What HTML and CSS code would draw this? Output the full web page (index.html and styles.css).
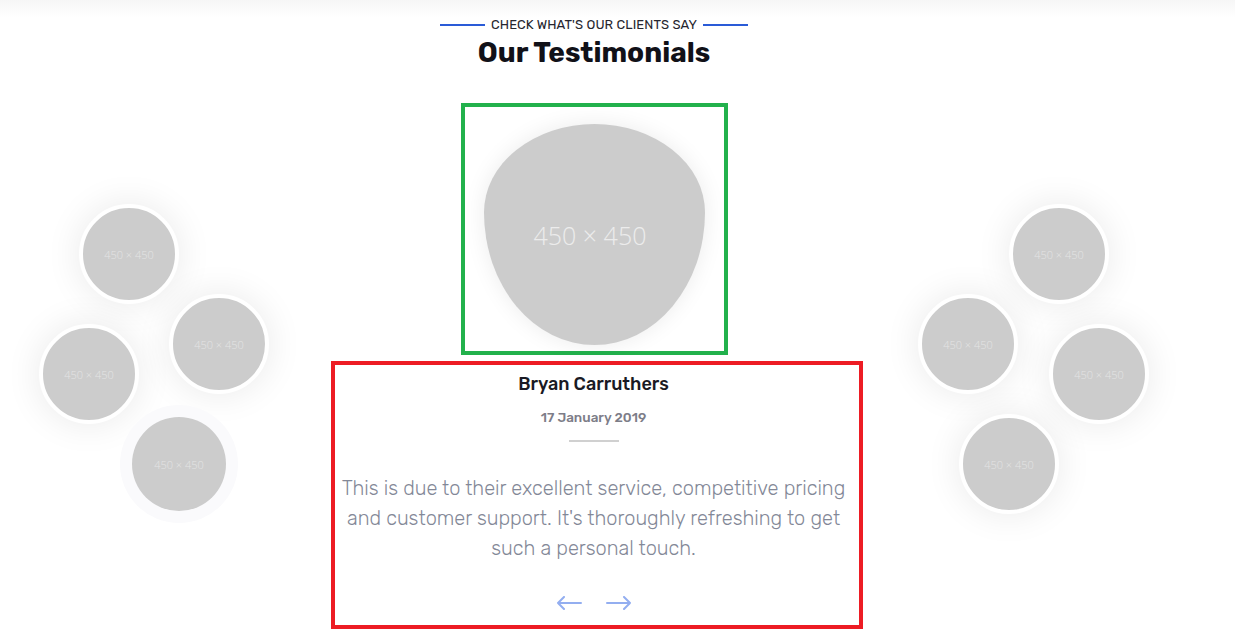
FILE: index.html
```html
<!DOCTYPE html>
<html lang="en">
<head>
<meta charset="utf-8">
<title>Our Testimonials</title>
<link rel="stylesheet" href="styles.css">
</head>
<body>
<div class="topshade"></div>
<main class="page">
  <header class="heading">
    <div class="eyebrow"><span class="rule"></span><span class="eyebrow-text">Check what's our clients say</span><span class="rule"></span></div>
    <h2 class="title">Our Testimonials</h2>
  </header>

  <section class="testimonials">
    <div class="cluster cluster-left">
      <div class="avatar av-a"><span>450 × 450</span></div>
      <div class="avatar av-b"><span>450 × 450</span></div>
      <div class="avatar av-c"><span>450 × 450</span></div>
      <div class="avatar av-d active"><span>450 × 450</span></div>
    </div>

    <div class="center">
      <div class="photo-frame">
        <div class="blob"><span>450 × 450</span></div>
      </div>
      <div class="quote-frame">
        <h3 class="name">Bryan Carruthers</h3>
        <div class="date">17 January 2019</div>
        <div class="divider"></div>
        <p class="quote">This is due to their excellent service, competitive pricing and customer support. It's thoroughly refreshing to get such a personal touch.</p>
        <div class="arrows">
          <button class="arrow" aria-label="Previous">
            <svg width="26" height="14" viewBox="0 0 26 14"><path d="M25 7H2M8 1L2 7l6 6" fill="none" stroke="currentColor" stroke-width="2" stroke-linecap="round" stroke-linejoin="round"/></svg>
          </button>
          <button class="arrow" aria-label="Next">
            <svg width="26" height="14" viewBox="0 0 26 14"><path d="M1 7h23M18 1l6 6-6 6" fill="none" stroke="currentColor" stroke-width="2" stroke-linecap="round" stroke-linejoin="round"/></svg>
          </button>
        </div>
      </div>
    </div>

    <div class="cluster cluster-right">
      <div class="avatar av-e"><span>450 × 450</span></div>
      <div class="avatar av-f"><span>450 × 450</span></div>
      <div class="avatar av-g"><span>450 × 450</span></div>
      <div class="avatar av-h"><span>450 × 450</span></div>
    </div>
  </section>
</main>
</body>
</html>
```

FILE: styles.css
```css
* { box-sizing: border-box; }
html, body { margin: 0; padding: 0; background: #fff; }
body {
  font-family: Rubik, Roboto, "Liberation Sans", sans-serif;
  color: #1a1a24;
  overflow: hidden;
}
.topshade {
  height: 17px;
  background: linear-gradient(#f6f6f6, #ffffff);
}
.page {
  width: 1188px;
}
.heading {
  text-align: center;
}
.eyebrow {
  display: flex;
  justify-content: center;
  align-items: center;
  gap: 6px;
  height: 16px;
}
.rule {
  width: 45px;
  height: 2px;
  background: #2a5bd7;
}
.eyebrow-text {
  font-size: 13px;
  line-height: 16px;
  text-transform: uppercase;
  color: #26262e;
  font-weight: 400;
  letter-spacing: 0.1px;
}
.title {
  margin: 2px 0 0;
  font-size: 28px;
  line-height: 36px;
  font-weight: 700;
  color: #111118;
}
.testimonials {
  display: grid;
  grid-template-columns: 331px 532px 1fr;
  margin-top: 32px;
}
.cluster {
  position: relative;
  height: 430px;
}
.avatar {
  position: absolute;
  width: 100px;
  height: 100px;
  border-radius: 50%;
  background: #cccccc;
  border: 4px solid #ffffff;
  box-shadow: 0 0 36px rgba(0, 0, 0, 0.09);
  display: flex;
  align-items: center;
  justify-content: center;
}
.avatar span {
  font-family: "Open Sans", "Liberation Sans", sans-serif;
  font-weight: 300;
  font-size: 11px;
  color: #e4e4e4;
}
.avatar.active {
  border: 0;
  width: 94px;
  height: 94px;
  box-shadow: 0 0 0 12px #fafafc;
}
.av-a { left: 79px; top: 101px; }
.av-b { left: 169px; top: 191px; }
.av-c { left: 39px; top: 221px; }
.av-d { left: 132px; top: 314px; }
.av-e { left: 146px; top: 101px; }
.av-f { left: 55px; top: 191px; }
.av-g { left: 186px; top: 221px; }
.av-h { left: 96px; top: 311px; }

.center {
  display: flex;
  flex-direction: column;
  align-items: flex-start;
}
.photo-frame {
  width: 267px;
  height: 252px;
  margin-left: 130px;
  border: 4px solid #22b14c;
  padding: 17px 19px 6px;
}
.blob {
  width: 221px;
  height: 221px;
  background: #cccccc;
  border-radius: 50% 50% 50% 50% / 40% 40% 60% 60%;
  box-shadow: 0 0 22px rgba(0, 0, 0, 0.08);
  display: flex;
  align-items: center;
  justify-content: center;
}
.blob span {
  font-family: "Open Sans", "Liberation Sans", sans-serif;
  font-weight: 300;
  font-size: 25px;
  color: #ececec;
  margin-right: 9px;
}
.quote-frame {
  width: 532px;
  height: 268px;
  margin-top: 6px;
  border: 4px solid #ed1c24;
  padding: 7px 13px 0 6px;
  text-align: center;
}
.name {
  margin: 0;
  font-size: 18px;
  line-height: 24px;
  font-weight: 500;
  color: #1a1a24;
}
.date {
  margin-top: 11px;
  font-size: 13.5px;
  line-height: 20px;
  font-weight: 500;
  color: #7d7d88;
}
.divider {
  width: 50px;
  height: 2px;
  background: #d0d0d0;
  margin: 13px auto 0;
}
.quote {
  margin: 31px 0 0;
  font-size: 20px;
  line-height: 30px;
  font-weight: 300;
  color: #838897;
}
.arrows {
  display: flex;
  justify-content: center;
  gap: 24px;
  margin-top: 33px;
}
.arrow {
  background: none;
  border: 0;
  padding: 0;
  color: #93aef0;
  display: block;
  line-height: 0;
  cursor: pointer;
}
```
